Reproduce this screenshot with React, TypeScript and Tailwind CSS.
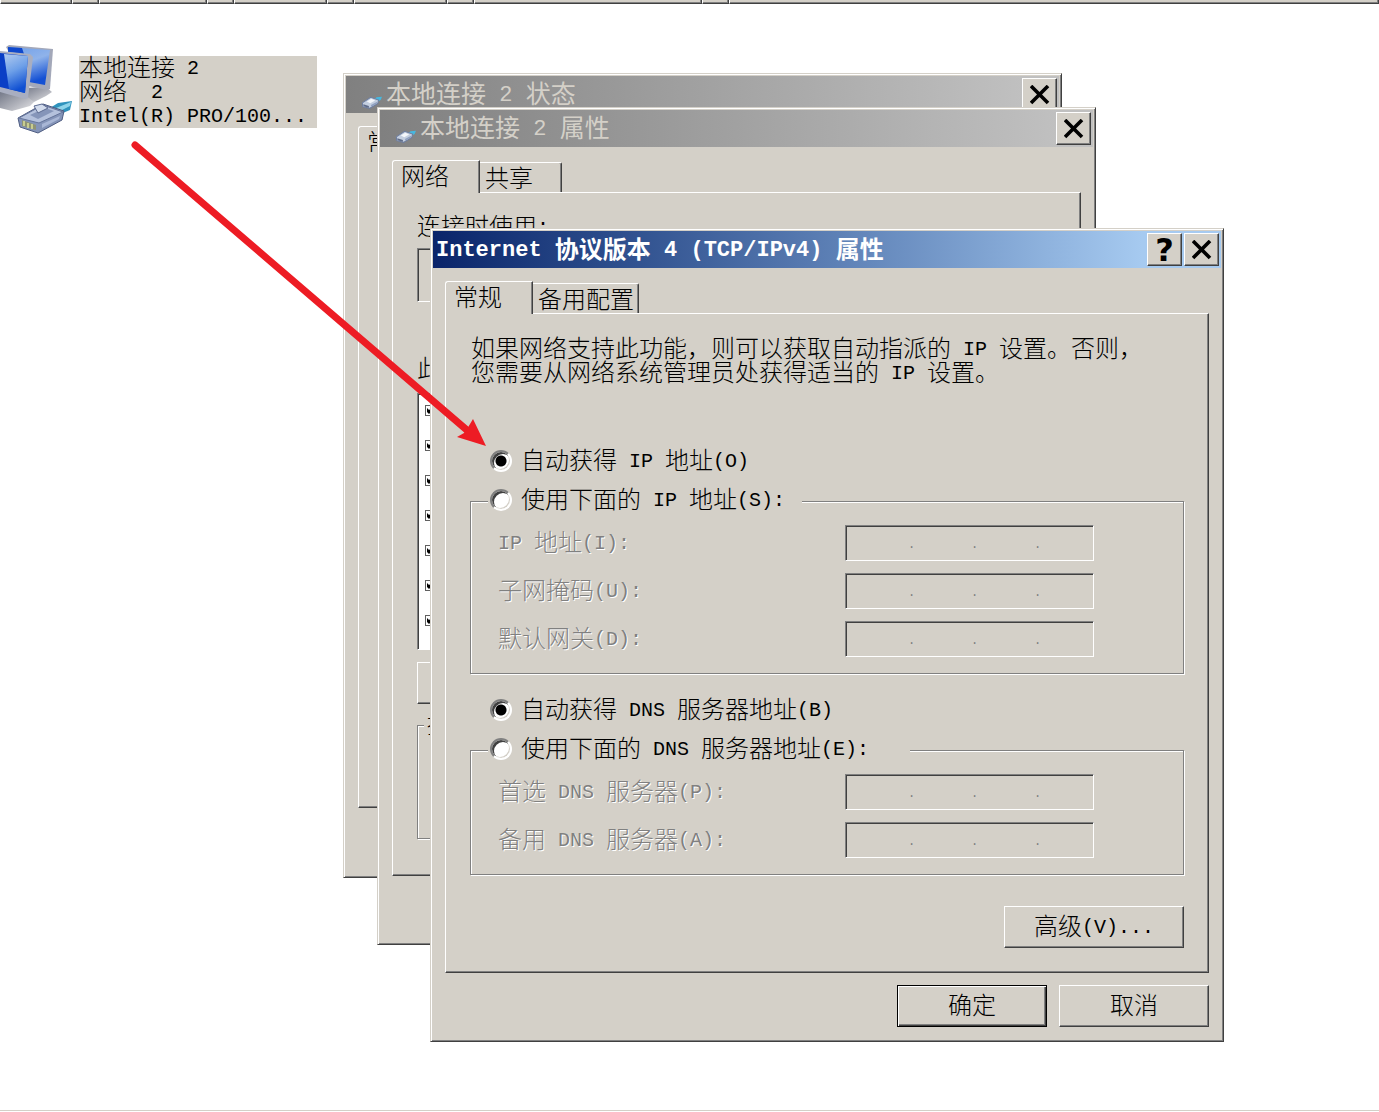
import type { ReactNode } from 'react'

const raised =
  'border border-t-white border-l-white border-r-[#404040] border-b-[#404040] shadow-[inset_-1px_-1px_0_#808080]'
const sunken =
  'border border-t-[#808080] border-l-[#808080] border-r-white border-b-white shadow-[inset_1px_1px_0_#404040]'
const etched =
  'border border-[#808080] shadow-[inset_1px_1px_0_#ffffff,1px_1px_0_#ffffff]'

/* Half-width characters take half the advance of a full-width one. */
function T({ children, title = false }: { children: string; title?: boolean }) {
  const latin = title ? 'align-[2px] text-[22px] leading-none' : 'align-[2px] text-[20px] leading-none'
  return (
    <span className="inline-block h-6 leading-7 whitespace-pre">
      {children.split(/([\x20-\x7e]+)/).map((part, i) =>
        i % 2 ? (
          <span key={i} className={latin}>
            {part}
          </span>
        ) : (
          part
        ),
      )}
    </span>
  )
}

function PlugShape() {
  return (
    <g>
      <path d="M50 64 L58 59 L72 57 L70 66 L58 71 Z" fill="#2f93bd" />
      <path d="M56 64 L71 58 L70 62 L58 68 Z" fill="#8fd4ea" />
      <path d="M18 74 L43 60 L64 67 L62 76 L38 89 L20 83 Z" fill="#8494b8" stroke="#4f5d82" />
      <path d="M19 74 L43 61 L63 68 L39 79 Z" fill="#b4c1dc" stroke="#66759b" />
      <path d="M30 71 L45 64 L54 67 L38 75 Z" fill="#8595b9" />
      <path d="M34 62 L42 60 L48 64 L38 69 Z" fill="#d3dced" stroke="#5d6c92" />
      <path d="M22 76 L36 81 L36 86 L22 82 Z" fill="#8f9476" />
      <path d="M24 77v5 M28 79v5 M32 80v5" stroke="#dcdf9a" strokeWidth="1.5" />
      <path d="M42 80 L60 72 L59 75 L42 84 Z" fill="#a9b7d6" />
    </g>
  )
}

function NetworkIcon() {
  return (
    <svg className="h-[92px] w-[74px] shrink-0" viewBox="0 0 74 92" aria-hidden="true">
      <defs>
        <linearGradient id="back" x1="0" y1="0" x2="0.4" y2="1">
          <stop offset="0" stopColor="#6f9ee8" />
          <stop offset="0.5" stopColor="#8fb3ea" />
          <stop offset="1" stopColor="#1450d4" />
        </linearGradient>
        <linearGradient id="front" x1="0" y1="0" x2="0.3" y2="1">
          <stop offset="0" stopColor="#b2cbee" />
          <stop offset="0.5" stopColor="#6d9fe8" />
          <stop offset="1" stopColor="#0f4fd2" />
        </linearGradient>
        <linearGradient id="stand" x1="0" y1="0" x2="1" y2="1">
          <stop offset="0" stopColor="#6f7484" />
          <stop offset="0.6" stopColor="#b3b5bd" />
          <stop offset="1" stopColor="#e6e6e8" />
        </linearGradient>
      </defs>
      <path d="M24 44 L46 43 L52 48 L46 52 L34 58 L22 56 Z" fill="url(#stand)" />
      <path d="M6 3 L9 1 L53 5 L50 45 L47 46 L28 42 Z" fill="#a3a8b9" />
      <path d="M8 3 L50 6 L45 41 L29 38 Z" fill="url(#back)" />
      <path d="M8 3 L22 4 L24 10 L8 8 Z" fill="#0f48cc" />
      <path d="M0 46 L24 50 L34 58 L30 62 L12 67 L0 64 Z" fill="url(#stand)" />
      <path d="M0 7 L30 10 L33 13 L28 54 L25 55 L0 48 Z" fill="#a9aec0" />
      <path d="M0 9 L28 12 L25 49 L0 43 Z" fill="#0a3fc6" />
      <path d="M4 10 L28 12 L25 49 L9 45 Z" fill="url(#front)" />
      <PlugShape />
    </svg>
  )
}

function PlugIcon() {
  return (
    <svg className="mb-1 h-[13px] w-5 shrink-0 self-end" viewBox="16 55 58 36" aria-hidden="true">
      <path d="M50 66 L58 58 L74 56 L70 66 L58 73 Z" fill="#46b8e0" />
      <path d="M17 74 L41 58 L64 66 L62 76 L38 90 L18 85 Z" fill="#c4cfe0" stroke="#6d7d9e" strokeWidth="3" />
      <path d="M30 70 L43 62 L54 67 L40 75 Z" fill="#f4f7fb" />
      <path d="M42 80 L60 71 L59 76 L43 85 Z" fill="#8fa0c0" />
      <path d="M20 78 L36 83 L36 88 L20 84 Z" fill="#5f6c88" />
    </svg>
  )
}

function CaptionButton({ label, children }: { label: string; children: ReactNode }) {
  return (
    <button
      type="button"
      aria-label={label}
      className={`flex h-[33px] w-[35px] items-center justify-center bg-[#d4d0c8] text-black ${raised}`}
    >
      {children}
    </button>
  )
}

function CloseButton() {
  return (
    <CaptionButton label="关闭">
      <svg className="size-5" viewBox="0 0 20 20" aria-hidden="true">
        <path d="M1 1 L18 18 M18 1 L1 18" stroke="#000" strokeWidth="3.6" />
      </svg>
    </CaptionButton>
  )
}

function Window({
  title,
  active = false,
  place,
  children,
}: {
  title: string
  active?: boolean
  place: string
  children: ReactNode
}) {
  const bar = active
    ? 'from-[#0a246a] to-[#a6caf0] to-90% text-white pl-[3px]'
    : 'from-[#808080] to-[#c0c0c0] to-95% text-[#d4d0c8] pl-4'
  return (
    <section
      className={`absolute isolate flex flex-col border border-t-[#d4d0c8] border-l-[#d4d0c8] border-r-[#404040] border-b-[#404040] bg-[#d4d0c8] p-[2px] shadow-[inset_1px_1px_0_#ffffff,inset_-1px_-1px_0_#808080] ${place}`}
    >
      <header className={`flex h-[37px] items-center gap-1 bg-linear-to-r pr-[2px] ${bar}`}>
        {!active && <PlugIcon />}
        <h2 className={`flex h-6 flex-1 ${active ? 'font-semibold' : 'text-[25px] font-normal'}`}>
          <T title>{title}</T>
        </h2>
        <div className="flex gap-[2px]">
          {active && (
            <CaptionButton label="帮助">
              <span className="font-['DejaVu_Sans'] text-[32px] leading-none font-bold">?</span>
            </CaptionButton>
          )}
          <CloseButton />
        </div>
      </header>
      {children}
    </section>
  )
}

function Tabs({ first, second, children }: { first: string; second?: string; children: ReactNode }) {
  return (
    <div className="mx-3 mt-[13px] flex flex-col">
      <div role="tablist" className="flex items-end">
        <button
          type="button"
          role="tab"
          aria-selected="true"
          className="relative z-10 -mb-px flex h-[33px] w-[88px] items-center rounded-tl-[3px] border border-t-white border-r-[#404040] border-b-0 border-l-white bg-[#d4d0c8] pl-2 shadow-[inset_-1px_0_0_#808080]"
        >
          <T>{first}</T>
        </button>
        {second && (
          <button
            type="button"
            role="tab"
            aria-selected="false"
            className="flex h-[30px] min-w-[82px] items-center rounded-tr-[2px] border-t border-r border-t-white border-r-[#404040] pt-[2px] pr-1 pl-[5px] shadow-[inset_-1px_0_0_#808080]"
          >
            <T>{second}</T>
          </button>
        )}
      </div>
      <div role="tabpanel" className={`flex flex-col px-6 ${raised}`}>
        {children}
      </div>
    </div>
  )
}

function Radio({ name, label, checked = false }: { name: string; label: string; checked?: boolean }) {
  return (
    <label className="flex h-6 items-center gap-[9px]">
      <input
        type="radio"
        name={name}
        defaultChecked={checked}
        className="size-[22px] shrink-0 appearance-none rounded-full border-2 border-t-[#808080] border-r-white border-b-white border-l-[#808080] bg-white bg-clip-padding shadow-[inset_2px_2px_0_#404040,inset_-1px_-1px_0_#d4d0c8] checked:bg-[radial-gradient(circle,#000_0_5px,transparent_6px)]"
      />
      <T>{label}</T>
    </label>
  )
}

function AddressRow({ label }: { label: string }) {
  return (
    <div className="flex h-9 items-center">
      <span className="flex w-[347px] text-[#808080] [text-shadow:1px_1px_0_#ffffff]">
        <T>{label}</T>
      </span>
      <div role="group" aria-label={label} className={`flex h-9 w-[249px] items-center pl-[3px] ${sunken}`}>
        {[1, 2, 3, 4].map((n) => (
          <div key={n} className={n < 4 ? 'flex w-[63px] items-center' : 'flex w-[50px] items-center'}>
            <input disabled aria-label={`${label} ${n}`} className="h-7 w-full min-w-0 bg-transparent text-center" />
            {n < 4 && <span className="w-1 pt-1 text-[12px] leading-none text-[#808080]">.</span>}
          </div>
        ))}
      </div>
    </div>
  )
}

function AddressGroup({
  name,
  label,
  legendPad,
  rows,
}: {
  name: string
  label: string
  legendPad: string
  rows: string[]
}) {
  return (
    <fieldset className={`mt-[14px] pb-4 ${etched}`}>
      <legend className={`ml-[17px] bg-[#d4d0c8] pt-px pb-[3px] pl-[2px] ${legendPad}`}>
        <Radio name={name} label={label} />
      </legend>
      <div className="flex flex-col gap-3 pt-[10px] pl-[27px]">
        {rows.map((row) => (
          <AddressRow key={row} label={row} />
        ))}
      </div>
    </fieldset>
  )
}

function HeaderStrip() {
  const widths = [
    'w-[72px]',
    'w-[27px]',
    'w-[108px]',
    'w-[27px]',
    'w-[93px]',
    'w-[27px]',
    'w-[93px]',
    'w-[27px]',
    'w-[228px]',
    'w-[27px]',
    'flex-1',
  ]
  return (
    <div className="flex h-1">
      {widths.map((w, i) => (
        <div
          key={i}
          className={`border-r border-b border-l border-l-white border-r-[#404040] border-b-[#404040] bg-[#d4d0c8] shadow-[inset_-1px_-1px_0_#808080] ${w}`}
        />
      ))}
    </div>
  )
}

export default function App() {
  return (
    <div className="relative flex min-h-screen flex-col overflow-hidden bg-white font-['Liberation_Mono','Noto_Sans_CJK_SC',monospace] text-[24px] leading-6 font-light text-black">
      <HeaderStrip />
      <main className="flex-1 pt-10">
        <div className="flex items-start gap-[5px]">
          <NetworkIcon />
          <div className="mt-3 flex w-[238px] flex-col bg-[#d4d0c8]">
            <T>本地连接 2</T>
            <T>网络  2</T>
            <T>Intel(R) PRO/100...</T>
          </div>
        </div>

        <Window title="本地连接 2 状态" place="top-[73px] left-[343px] w-[719px] h-[805px]">
          <Tabs first="常规">
            <div className="h-[648px]" />
          </Tabs>
        </Window>

        <Window title="本地连接 2 属性" place="top-[107px] left-[377px] w-[719px] h-[838px]">
          <Tabs first="网络" second="共享">
            <p className="mt-[22px] flex">
              <T>连接时使用:</T>
            </p>
            <div className={`mt-[9px] h-[54px] ${sunken}`} />
            <p className="mt-[55px] flex">
              <T>此</T>
            </p>
            <ul className={`mt-3 bg-white px-[7px] pt-px pb-[9px] ${sunken}`}>
              {[1, 2, 3, 4, 5, 6, 7].map((n) => (
                <li key={n} className="grid h-[35px] justify-start pt-[10px]">
                  <input
                    type="checkbox"
                    defaultChecked
                    aria-label={`项目 ${n}`}
                    className="col-start-1 row-start-1 size-[11px] appearance-none border border-[#606060] bg-white"
                  />
                  <svg className="pointer-events-none col-start-1 row-start-1 size-[11px]" viewBox="0 0 11 11" aria-hidden="true">
                    <path d="M2 3 L4 5 L8 2 V5 L4 9 L2 7 Z" fill="#000" />
                  </svg>
                </li>
              ))}
            </ul>
            <button type="button" aria-label="安装" className={`mt-3 h-[42px] w-[180px] ${raised}`} />
            <fieldset className={`mt-[9px] h-[126px] ${etched}`}>
              <legend className="ml-[6px] flex bg-[#d4d0c8] px-[3px]">
                <T>描述</T>
              </legend>
            </fieldset>
            <div className="h-[36px]" />
          </Tabs>
        </Window>

        <Window title="Internet 协议版本 4 (TCP/IPv4) 属性" active place="top-[228px] left-[430px] w-[794px]">
          <Tabs first="常规" second="备用配置">
            <p className="mt-[23px] flex flex-col pl-px">
              <T>如果网络支持此功能，则可以获取自动指派的 IP 设置。否则，</T>
              <T>您需要从网络系统管理员处获得适当的 IP 设置。</T>
            </p>
            <div className="mt-16 pl-5">
              <Radio name="ip" label="自动获得 IP 地址(O)" checked />
            </div>
            <AddressGroup
              name="ip"
              label="使用下面的 IP 地址(S):"
              legendPad="pr-[17px]"
              rows={['IP 地址(I):', '子网掩码(U):', '默认网关(D):']}
            />
            <div className="mt-6 pl-5">
              <Radio name="dns" label="自动获得 DNS 服务器地址(B)" checked />
            </div>
            <AddressGroup
              name="dns"
              label="使用下面的 DNS 服务器地址(E):"
              legendPad="pr-[41px]"
              rows={['首选 DNS 服务器(P):', '备用 DNS 服务器(A):']}
            />
            <button
              type="button"
              className={`mt-[31px] mb-6 flex h-[42px] w-[180px] items-center justify-center self-end ${raised}`}
            >
              <T>高级(V)...</T>
            </button>
          </Tabs>
          <footer className="mt-3 mr-3 mb-3 flex justify-end gap-3">
            <button
              type="button"
              className="flex h-[42px] w-[150px] items-center justify-center border border-black shadow-[inset_1px_1px_0_#ffffff,inset_-1px_-1px_0_#404040,inset_-2px_-2px_0_#808080]"
            >
              <T>确定</T>
            </button>
            <button type="button" className={`flex h-[42px] w-[150px] items-center justify-center ${raised}`}>
              <T>取消</T>
            </button>
          </footer>
        </Window>

        <svg
          className="pointer-events-none absolute top-[140px] left-[130px] h-[310px] w-[360px]"
          viewBox="130 140 360 310"
          aria-hidden="true"
        >
          <path d="M135 145 L468 431" stroke="#ed1c24" strokeWidth="7" strokeLinecap="round" />
          <path d="M486 446 L473 419 L467 429 L464 433 L457 437 Z" fill="#ed1c24" />
        </svg>
      </main>
      <div className="h-[2px] border-t border-[#d4d0c8]" />
    </div>
  )
}
